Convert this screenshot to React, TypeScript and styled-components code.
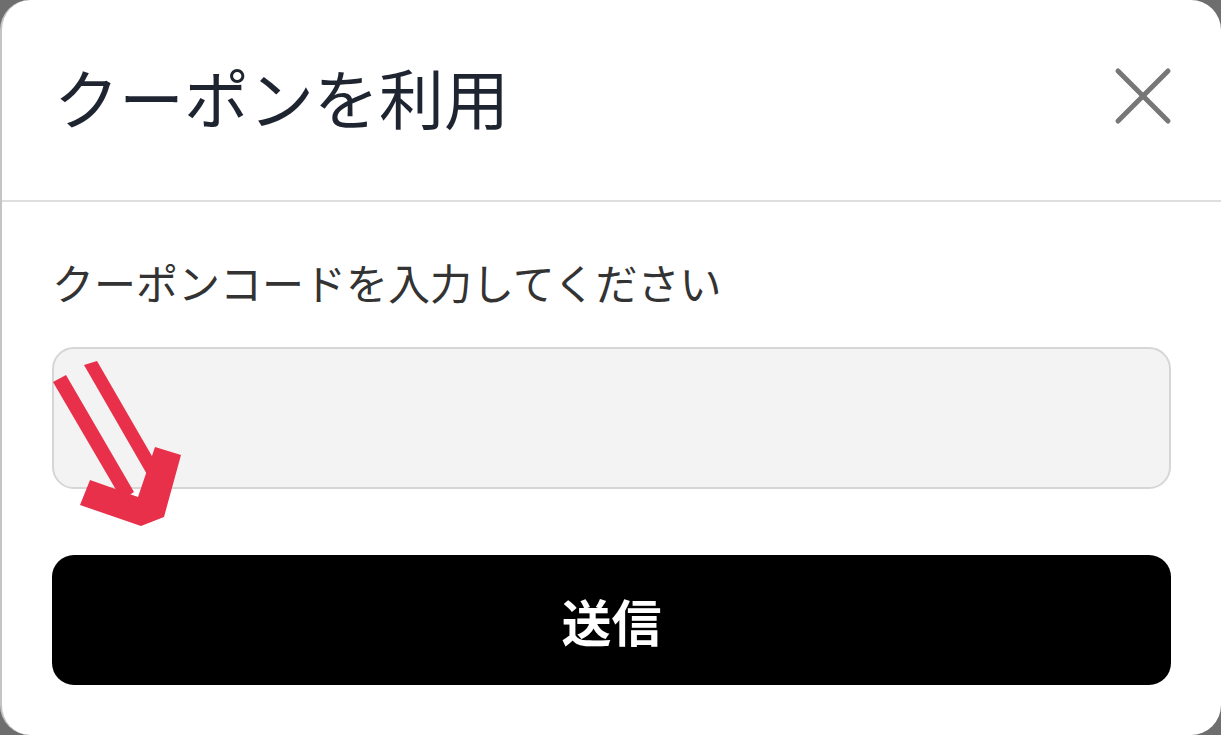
import React from "react";
import styled, { createGlobalStyle } from "styled-components";

const GlobalStyle = createGlobalStyle`
  html, body {
    margin: 0;
    padding: 0;
    background: #6e6e6e;
  }
  * {
    box-sizing: border-box;
  }
`;

const Modal = styled.div`
  position: relative;
  width: 1221px;
  height: 735px;
  background: #ffffff;
  border-left: 2px solid #c4c4c4;
  border-radius: 30px;
  overflow: hidden;
  font-family: "Noto Sans CJK JP", "Noto Sans", sans-serif;
  display: flex;
  flex-direction: column;
`;

const Header = styled.div`
  height: 202px;
  flex-shrink: 0;
  display: flex;
  align-items: center;
  justify-content: space-between;
  padding: 0 48px 8px 52px;
  border-bottom: 2px solid #dedee1;
`;

const Title = styled.h1`
  margin: 0;
  font-size: 65px;
  font-weight: 400;
  color: #1e2430;
`;

const CloseButton = styled.button`
  width: 60px;
  height: 60px;
  padding: 0;
  border: none;
  background: transparent;
  display: flex;
  align-items: center;
  justify-content: center;
  cursor: pointer;
`;

const Body = styled.div`
  padding: 49px 50px 0 50px;
  display: flex;
  flex-direction: column;
`;

const Label = styled.label`
  font-size: 42px;
  line-height: 62px;
  color: #333333;
  margin-bottom: 34px;
`;

const CodeInput = styled.input`
  height: 142px;
  width: 100%;
  border: 2px solid #d6d6d6;
  border-radius: 22px;
  background: #f3f3f3;
  font-size: 40px;
  padding: 0 28px;
  outline: none;
  font-family: inherit;
`;

const SubmitButton = styled.button`
  margin-top: 66px;
  height: 130px;
  width: 100%;
  border: none;
  border-radius: 22px;
  background: #000000;
  color: #ffffff;
  font-family: inherit;
  font-size: 50px;
  font-weight: 700;
  cursor: pointer;
`;

const ArrowMark = styled.svg`
  position: absolute;
  left: 0;
  top: 0;
  pointer-events: none;
`;

const CloseIcon = () => (
  <svg width="60" height="60" viewBox="0 0 60 60">
    <g stroke="#777777" strokeWidth="5" strokeLinecap="round">
      <line x1="5" y1="5" x2="55" y2="55" />
      <line x1="55" y1="5" x2="5" y2="55" />
    </g>
  </svg>
);

export default function App() {
  return (
    <>
      <GlobalStyle />
      <Modal>
        <Header>
          <Title>クーポンを利用</Title>
          <CloseButton aria-label="close">
            <CloseIcon />
          </CloseButton>
        </Header>
        <Body>
          <Label htmlFor="coupon">クーポンコードを入力してください</Label>
          <CodeInput id="coupon" type="text" />
          <SubmitButton>送信</SubmitButton>
        </Body>
        <ArrowMark width="200" height="540" viewBox="0 0 200 540">
          <g fill="#e8304a">
            <polygon points="51,382 64,375 132,492 120,500" />
            <polygon points="82,365 95,361 158,470 146,476" />
            <polygon points="88,480 136,497 153,447 179,455 162,517 139,526 78,505" />
          </g>
        </ArrowMark>
      </Modal>
    </>
  );
}
